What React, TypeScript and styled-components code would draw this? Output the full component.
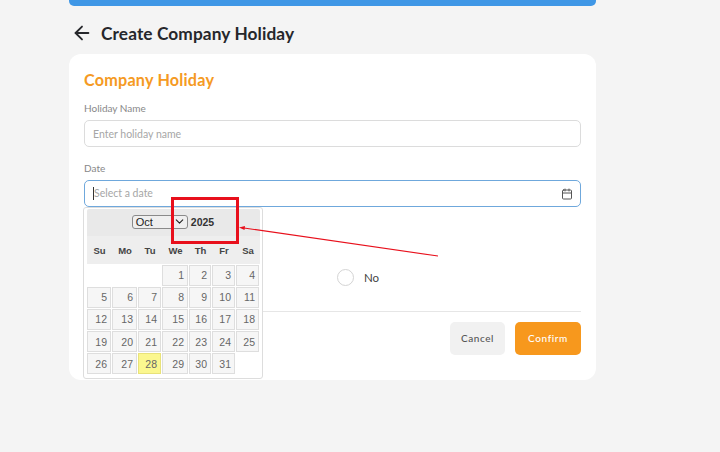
import styled, { createGlobalStyle } from 'styled-components';
import { ArrowLeft, Calendar, ChevronDown } from 'lucide-react';

const GlobalStyle = createGlobalStyle`
  html, body {
    margin: 0;
    padding: 0;
    background: #f4f4f4;
    font-family: 'Lato', 'Open Sans', sans-serif;
  }
`;

const Page = styled.div`
  position: relative;
  width: 720px;
  height: 452px;
  overflow: hidden;
  padding-left: 69px;
  box-sizing: border-box;
`;

const Column = styled.div`
  width: 527px;
`;

const TopBar = styled.div`
  height: 6px;
  background: #3f97e6;
  border-radius: 0 0 5px 5px;
`;

const Header = styled.div`
  display: flex;
  align-items: center;
  gap: 8px;
  height: 48px;
  box-sizing: border-box;
  padding: 6px 0 0 2px;
  color: #26272b;
`;

const Title = styled.h1`
  margin: 0;
  font-size: 17.3px;
  font-weight: 700;
  letter-spacing: 0.1px;
`;

const Card = styled.div`
  position: relative;
  height: 326px;
  box-sizing: border-box;
  padding: 16px 15px 0;
  background: #fff;
  border-radius: 12px;
  display: flex;
  flex-direction: column;
`;

const CardTitle = styled.h2`
  margin: 0 0 12px;
  font-size: 16.2px;
  line-height: 20px;
  font-weight: 700;
  color: #f59a23;
  letter-spacing: 0.2px;
`;

const Label = styled.div`
  font-size: 10px;
  line-height: 12px;
  color: #888;
  margin-bottom: 6px;
`;

const Field = styled.div<{ $focused?: boolean }>`
  height: 27px;
  box-sizing: border-box;
  display: flex;
  align-items: center;
  justify-content: space-between;
  padding: 0 8px;
  margin-bottom: 15px;
  border-radius: 5px;
  border: 1px solid ${p => (p.$focused ? '#6fa8dc' : '#dcdcdc')};
  font-size: 10.5px;
  color: #a6a6a6;
`;

const FieldIcon = styled(Calendar)`
  margin-right: -1px;
  color: #555;
`;

const Caret = styled.span`
  display: inline-block;
  width: 1px;
  height: 13px;
  background: #333;
  vertical-align: -3px;
`;

const RadioRow = styled.div`
  display: flex;
  align-items: center;
  gap: 10px;
  margin: 46px 0 0 253px;
  height: 18px;
  font-size: 11.5px;
  color: #444;
`;

const Radio = styled.span`
  width: 15px;
  height: 15px;
  border: 1px solid #d4d4d4;
  border-radius: 50%;
`;

const Actions = styled.div`
  margin-top: 25px;
  padding-top: 10px;
  border-top: 1px solid #e6e6e6;
  display: flex;
  justify-content: flex-end;
  gap: 10px;
`;

const ActionButton = styled.button<{ $primary?: boolean }>`
  height: 33px;
  width: ${p => (p.$primary ? '66px' : '55px')};
  border: none;
  border-radius: 5px;
  padding: 0 0 2px;
  font-family: inherit;
  font-size: 10px;
  font-weight: 500;
  letter-spacing: 0.6px;
  background: ${p => (p.$primary ? '#f7981d' : '#f1f1f1')};
  color: ${p => (p.$primary ? '#fff' : '#555')};
`;

const Picker = styled.div`
  position: absolute;
  left: 14px;
  top: 153px;
  width: 180px;
  height: 172px;
  box-sizing: border-box;
  padding: 1px 2px 1px 3px;
  background: #fff;
  border: 1px solid #ddd;
  border-radius: 3px;
  font-family: 'Liberation Sans', Arial, sans-serif;
`;

const PickerHead = styled.div`
  height: 27px;
  box-sizing: border-box;
  padding: 0 1px 2px 0;
  display: flex;
  align-items: center;
  justify-content: center;
  gap: 3px;
  background: #e9e9e9;
  font-size: 10.5px;
  font-weight: 700;
  color: #333;
  border-radius: 2px 2px 0 0;
`;

const MonthSelect = styled.div`
  width: 56px;
  height: 14px;
  box-sizing: border-box;
  display: flex;
  align-items: center;
  justify-content: space-between;
  padding: 0 1px 0 3px;
  background: #efefef;
  border: 1px solid #8a8a8a;
  border-radius: 3px;
  font-weight: 400;
  font-size: 11px;
  color: #222;
`;

const WeekRow = styled.div`
  display: grid;
  grid-template-columns: 25px 26px 24px 27px 23px 24px 24px;
  height: 28px;
  align-items: center;
  background: #eeeeee;
  font-size: 9.5px;
  font-weight: 700;
  color: #444;
  text-align: center;
`;

const Days = styled.div`
  display: grid;
  grid-template-columns: 25px 26px 24px 27px 23px 24px 24px;
  grid-auto-rows: 20.5px;
  row-gap: 1.6px;
  padding-top: 1px;
`;

const Day = styled.div<{ $today?: boolean; $start?: number }>`
  ${p => (p.$start ? `grid-column-start: ${p.$start};` : '')}
  margin-right: 1px;
  box-sizing: border-box;
  padding-right: 3px;
  display: flex;
  align-items: center;
  justify-content: flex-end;
  font-size: 10.5px;
  color: #666;
  background: ${p => (p.$today ? '#fbf78f' : '#f6f6f6')};
  border: 1px solid ${p => (p.$today ? '#e8e27a' : '#dedede')};
`;

const Arrow = styled.svg`
  position: absolute;
  left: 0;
  top: 0;
  pointer-events: none;
`;

const days = Array.from({ length: 31 }, (_, i) => i + 1);

export default function App() {
  return (
    <Page>
      <GlobalStyle />
      <Column>
        <TopBar />
        <Header>
          <ArrowLeft size={22} strokeWidth={2} />
          <Title>Create Company Holiday</Title>
        </Header>
        <Card>
          <CardTitle>Company Holiday</CardTitle>
          <Label>Holiday Name</Label>
          <Field>Enter holiday name</Field>
          <Label>Date</Label>
          <Field $focused>
            <span>
              <Caret />
              Select a date
            </span>
            <FieldIcon size={12} />
          </Field>
          <RadioRow>
            <Radio />
            No
          </RadioRow>
          <Actions>
            <ActionButton>Cancel</ActionButton>
            <ActionButton $primary>Confirm</ActionButton>
          </Actions>
          <Picker>
            <PickerHead>
              <MonthSelect>
                Oct
                <ChevronDown size={13} strokeWidth={2} />
              </MonthSelect>
              2025
            </PickerHead>
            <WeekRow>
              {['Su', 'Mo', 'Tu', 'We', 'Th', 'Fr', 'Sa'].map(d => (
                <span key={d}>{d}</span>
              ))}
            </WeekRow>
            <Days>
              {days.map(d => (
                <Day key={d} $start={d === 1 ? 4 : undefined} $today={d === 28}>
                  {d}
                </Day>
              ))}
            </Days>
          </Picker>
        </Card>
      </Column>
      {/* red annotation drawn over the screenshot */}
      <Arrow width="720" height="452" viewBox="0 0 720 452">
        <rect x="172.5" y="198.5" width="65" height="44" fill="none" stroke="#e8101c" strokeWidth="3" />
        <line x1="438" y1="256" x2="244" y2="228" stroke="#e8101c" strokeWidth="1.2" />
        <path d="M239 227.5 L245 226 L244.5 230 Z" fill="#e8101c" />
      </Arrow>
    </Page>
  );
}
